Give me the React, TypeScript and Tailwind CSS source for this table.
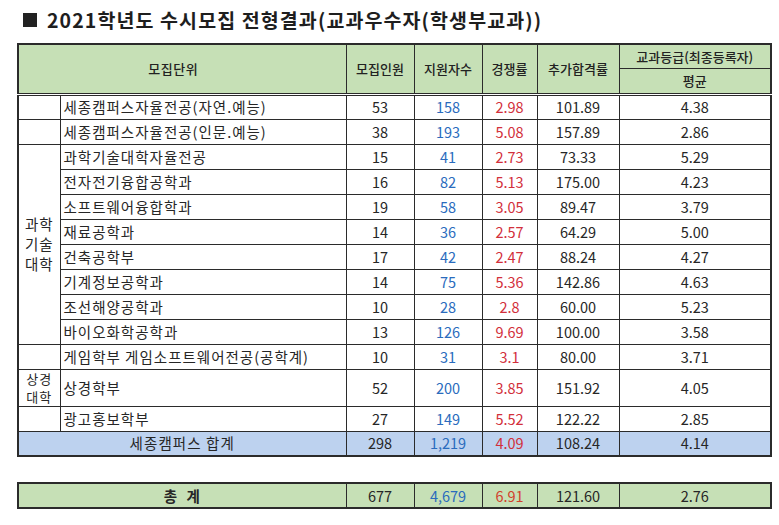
const rows = [
  { name: '세종캠퍼스자율전공(자연.예능)', quota: '53', applied: '158', rate: '2.98', extra: '101.89', grade: '4.38' },
  { name: '세종캠퍼스자율전공(인문.예능)', quota: '38', applied: '193', rate: '5.08', extra: '157.89', grade: '2.86' },
  { name: '과학기술대학자율전공', quota: '15', applied: '41', rate: '2.73', extra: '73.33', grade: '5.29' },
  { name: '전자전기융합공학과', quota: '16', applied: '82', rate: '5.13', extra: '175.00', grade: '4.23' },
  { name: '소프트웨어융합학과', quota: '19', applied: '58', rate: '3.05', extra: '89.47', grade: '3.79' },
  { name: '재료공학과', quota: '14', applied: '36', rate: '2.57', extra: '64.29', grade: '5.00' },
  { name: '건축공학부', quota: '17', applied: '42', rate: '2.47', extra: '88.24', grade: '4.27' },
  { name: '기계정보공학과', quota: '14', applied: '75', rate: '5.36', extra: '142.86', grade: '4.63' },
  { name: '조선해양공학과', quota: '10', applied: '28', rate: '2.8', extra: '60.00', grade: '5.23' },
  { name: '바이오화학공학과', quota: '13', applied: '126', rate: '9.69', extra: '100.00', grade: '3.58' },
  { name: '게임학부 게임소프트웨어전공(공학계)', quota: '10', applied: '31', rate: '3.1', extra: '80.00', grade: '3.71' },
  { name: '상경학부', quota: '52', applied: '200', rate: '3.85', extra: '151.92', grade: '4.05' },
  { name: '광고홍보학부', quota: '27', applied: '149', rate: '5.52', extra: '122.22', grade: '2.85' },
];

const cell = 'border border-[#2b2b2b] p-0 text-center';

const Cols = () => (
  <colgroup>
    <col className="w-[42px]" />
    <col className="w-[286px]" />
    <col className="w-[68px]" />
    <col className="w-[68px]" />
    <col className="w-[55px]" />
    <col className="w-[82px]" />
    <col className="w-[152px]" />
  </colgroup>
);

const CategoryCell = ({ index }: { index: number }) => {
  if (index === 2) {
    return (
      <td rowSpan={8} className={`${cell} text-[14.5px] leading-[20px] tracking-[1px]`}>
        과학
        <br />
        기술
        <br />
        대학
      </td>
    );
  }
  if (index > 2 && index < 10) return null;
  if (index === 11) {
    return (
      <td className={`${cell} text-[13px] leading-[18px] tracking-[1px]`}>
        상경
        <br />
        대학
      </td>
    );
  }
  return <td className={cell}></td>;
};

export default function App() {
  return (
    <div className="w-[779px] h-[525px] bg-white font-['Noto_Sans_CJK_KR','Noto_Sans',sans-serif] text-[#262626] overflow-hidden">
      {/* TITLE */}
      <div className="flex items-center gap-[10px] pl-[23px] mt-[6px] h-[28px]">
        <div className="w-[14px] h-[14px] bg-[#222]"></div>
        <h1 className="font-bold text-[19.5px] tracking-[1.1px] text-[#1e1e1e] leading-none">
          2021학년도 수시모집 전형결과(교과우수자(학생부교과))
        </h1>
      </div>

      {/* MAIN TABLE */}
      <table className="ml-[17px] mt-[9px] table-fixed border-collapse border-2 border-[#2b2b2b] w-[753px]">
        <Cols />
        <thead className="bg-[#c6e0b6] text-[13px] font-medium text-[#222]">
          <tr className="h-[24px]">
            <th rowSpan={2} colSpan={2} className={`${cell} font-medium pr-[18px] tracking-[0.5px]`}>
              모집단위
            </th>
            <th rowSpan={2} className={`${cell} font-medium`}>모집인원</th>
            <th rowSpan={2} className={`${cell} font-medium`}>지원자수</th>
            <th rowSpan={2} className={`${cell} font-medium`}>경쟁률</th>
            <th rowSpan={2} className={`${cell} font-medium`}>추가합격률</th>
            <th className={`${cell} font-medium`}>교과등급(최종등록자)</th>
          </tr>
          <tr className="h-[26px] border-b-[3px] border-double border-[#2b2b2b]">
            <th className={`${cell} font-medium border-b-[3px] border-double`}>평균</th>
          </tr>
        </thead>
        <tbody className="text-[14.5px]">
          {rows.map((row, i) => (
            <tr key={row.name} className={i === 11 ? 'h-[36px]' : 'h-[25px]'}>
              <CategoryCell index={i} />
              <td className={`${cell} text-left pl-[3px] whitespace-nowrap tracking-[1px]`}>{row.name}</td>
              <td className={cell}>{row.quota}</td>
              <td className={`${cell} text-[#2a6bbd]`}>{row.applied}</td>
              <td className={`${cell} text-[#d22f3b]`}>{row.rate}</td>
              <td className={cell}>{row.extra}</td>
              <td className={cell}>{row.grade}</td>
            </tr>
          ))}
          <tr className="h-[25px] bg-[#bdd2ef]">
            <td colSpan={2} className={`${cell} tracking-[1.1px]`}>세종캠퍼스 합계</td>
            <td className={cell}>298</td>
            <td className={`${cell} text-[#2a6bbd]`}>1,219</td>
            <td className={`${cell} text-[#d22f3b]`}>4.09</td>
            <td className={cell}>108.24</td>
            <td className={cell}>4.14</td>
          </tr>
        </tbody>
      </table>

      {/* GRAND TOTAL */}
      <table className="ml-[17px] mt-[25px] table-fixed border-collapse border-2 border-[#2b2b2b] w-[753px]">
        <Cols />
        <tbody className="text-[14.5px] bg-[#c6e0b6]">
          <tr className="h-[25px]">
            <td colSpan={2} className={`${cell} font-bold tracking-[1px]`}>총&nbsp;&nbsp;계</td>
            <td className={cell}>677</td>
            <td className={`${cell} text-[#2a6bbd]`}>4,679</td>
            <td className={`${cell} text-[#d2402c]`}>6.91</td>
            <td className={cell}>121.60</td>
            <td className={cell}>2.76</td>
          </tr>
        </tbody>
      </table>
    </div>
  );
}
